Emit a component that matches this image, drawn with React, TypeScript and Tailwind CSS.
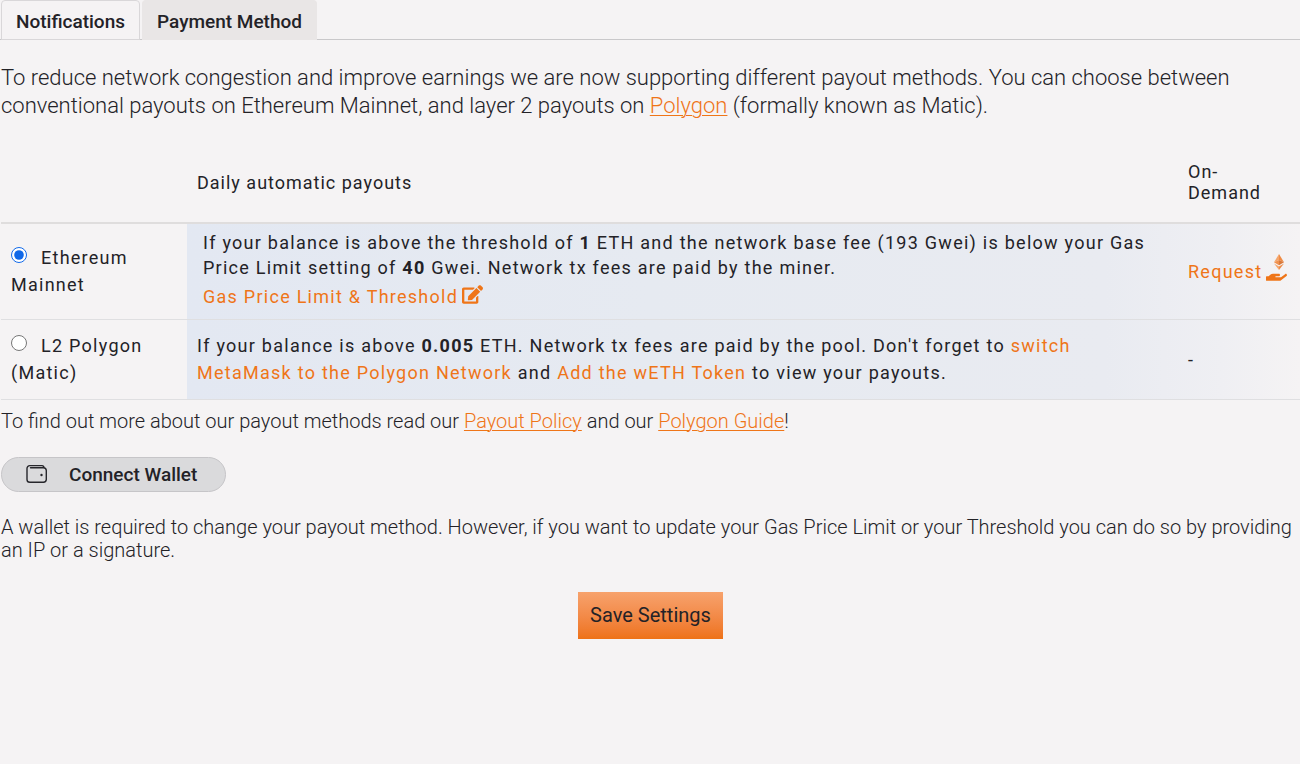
import type { ReactNode } from "react";
import { FaEdit, FaHandHolding } from "react-icons/fa";

const TextLink = ({ children }: { children: ReactNode }) => (
  <a href="#" className="text-[#ef7518] underline underline-offset-2 decoration-1">{children}</a>
);

const TableLink = ({ children }: { children: ReactNode }) => (
  <a href="#" className="text-[#ef7518]">{children}</a>
);

const WalletIcon = () => (
  <svg viewBox="0 0 22 20" className="w-[22px] h-5" fill="none" stroke="#26262b" strokeLinecap="round" aria-hidden="true">
    <path strokeWidth="1.4" d="M4.5 3.7H17.5A3 3 0 0 1 20.3 6.5V15.5A3 3 0 0 1 17.5 18.3H3.8A2.8 2.8 0 0 1 1 15.5V4.5A2.8 2.8 0 0 1 3.8 1.6H16A2 2 0 0 1 18 3.7" />
    <circle cx="15.5" cy="11" r="1.2" fill="#26262b" stroke="none" />
  </svg>
);

const RequestIcon = () => (
  <span className="inline-flex flex-col items-center w-[21px] mb-2 shrink-0" aria-hidden="true">
    <svg viewBox="0 0 10 16" className="w-2.5 h-4 ml-1">
      <path d="M5 0L0 8.2L5 6Z" fill="#f5a56b" />
      <path d="M5 0L10 8.2L5 6Z" fill="#ef8b45" />
      <path d="M0 8.2L5 6V11.2Z" fill="#f0914e" />
      <path d="M10 8.2L5 6V11.2Z" fill="#d9793a" />
      <path d="M0 9.6L5 12.6V16Z" fill="#f5a56b" />
      <path d="M10 9.6L5 12.6V16Z" fill="#ef8b45" />
    </svg>
    <FaHandHolding className="w-[21px] h-[19px] -mt-2 text-[#ef7518]" />
  </span>
);

const PayoutOption = ({ label, checked }: { label: string; checked?: boolean }) => (
  <label className="block">
    <input type="radio" name="payout" defaultChecked={checked} className="w-4 h-4 mr-3.5 align-[1px] accent-[#1068e8]" />
    {label}
  </label>
);

export default function App() {
  return (
    <main className="min-h-screen bg-[#f5f3f4] text-[#232227] font-['Roboto',sans-serif] font-light text-xl leading-[23px]">
      <nav className="flex items-end gap-0.5 pl-px h-10 border-b border-[#c9c8ca] text-[19px] font-medium">
        <button type="button" className="h-10 -mb-px px-3.5 pt-0.5 rounded-t border border-[#d9d7d9] bg-[#f5f3f4]">Notifications</button>
        <button type="button" className="h-10 -mb-px px-3.5 pt-0.5 rounded-t border border-b-0 border-[#e9e6e6] bg-[#e9e6e6]">Payment Method</button>
      </nav>

      <p className="mt-6 pl-px text-[22px] leading-7">
        To reduce network congestion and improve earnings we are now supporting different payout methods. You can choose between conventional payouts on Ethereum Mainnet, and layer 2 payouts on <TextLink>Polygon</TextLink> (formally known as Matic).
      </p>

      <div className="mt-[22px] pl-px">
        <table className="w-full table-fixed border-collapse text-lg leading-[27px] font-normal text-left">
          <colgroup>
            <col className="w-[186px]" />
            <col />
            <col className="w-[122px]" />
          </colgroup>
          <thead className="tracking-[1px]">
            <tr className="h-[81px] border-b-2 border-[#dfdddd] leading-[21px]">
              <th />
              <th className="px-2.5 font-normal">Daily automatic payouts</th>
              <th className="px-2.5 font-normal">On-Demand</th>
            </tr>
          </thead>
          <tbody className="tracking-[0.07em] bg-[linear-gradient(to_right,#f5f3f4_186px,#e3e8f2_186px,#e6eaf1_50%,#e9ebf1_85%,#efeff3_94%,#f5f3f4)]">
            <tr className="h-24 border-b border-[#dfdfe1]">
              <td className="px-2.5"><PayoutOption label="Ethereum Mainnet" checked /></td>
              <td className="px-4">
                <p className="leading-[25px]">
                  If your balance is above the threshold of <b>1</b> ETH and the network base fee (193 Gwei) is below your Gas Price Limit setting of <b>40</b> Gwei. Network tx fees are paid by the miner.
                </p>
                <a href="#" className="flex items-center gap-1 h-8 text-[#ef7518]">
                  Gas Price Limit &amp; Threshold <FaEdit className="w-[21px] h-[19px] mb-1" />
                </a>
              </td>
              <td className="pl-2.5">
                <a href="#" className="flex items-center gap-1 text-[#ef7518]">Request <RequestIcon /></a>
              </td>
            </tr>
            <tr className="h-20 border-b border-[#dfdfe1]">
              <td className="px-2.5"><PayoutOption label="L2 Polygon (Matic)" /></td>
              <td className="pl-2.5 pr-8">
                If your balance is above <b>0.005</b> ETH. Network tx fees are paid by the pool. Don't forget to <TableLink>switch MetaMask to the Polygon Network</TableLink> and <TableLink>Add the wETH Token</TableLink> to view your payouts.
              </td>
              <td className="px-2.5">-</td>
            </tr>
          </tbody>
        </table>
      </div>

      <div className="pl-px">
        <p className="mt-2.5">
          To find out more about our payout methods read our <TextLink>Payout Policy</TextLink> and our <TextLink>Polygon Guide</TextLink>!
        </p>
        <button type="button" className="mt-6 flex items-center gap-[21px] h-[35px] pl-6 pr-7 rounded-full border border-[#c6c5c8] bg-[#dadadc] text-[19px] font-medium">
          <WalletIcon /> Connect Wallet
        </button>
        <p className="mt-6">
          A wallet is required to change your payout method. However, if you want to update your Gas Price Limit or your Threshold you can do so by providing an IP or a signature.
        </p>
        <button type="button" className="block mt-[30px] mx-auto h-[47px] px-3 bg-linear-to-b from-[#f7a26c] to-[#ee7215] text-xl font-normal">
          Save Settings
        </button>
      </div>
    </main>
  );
}
